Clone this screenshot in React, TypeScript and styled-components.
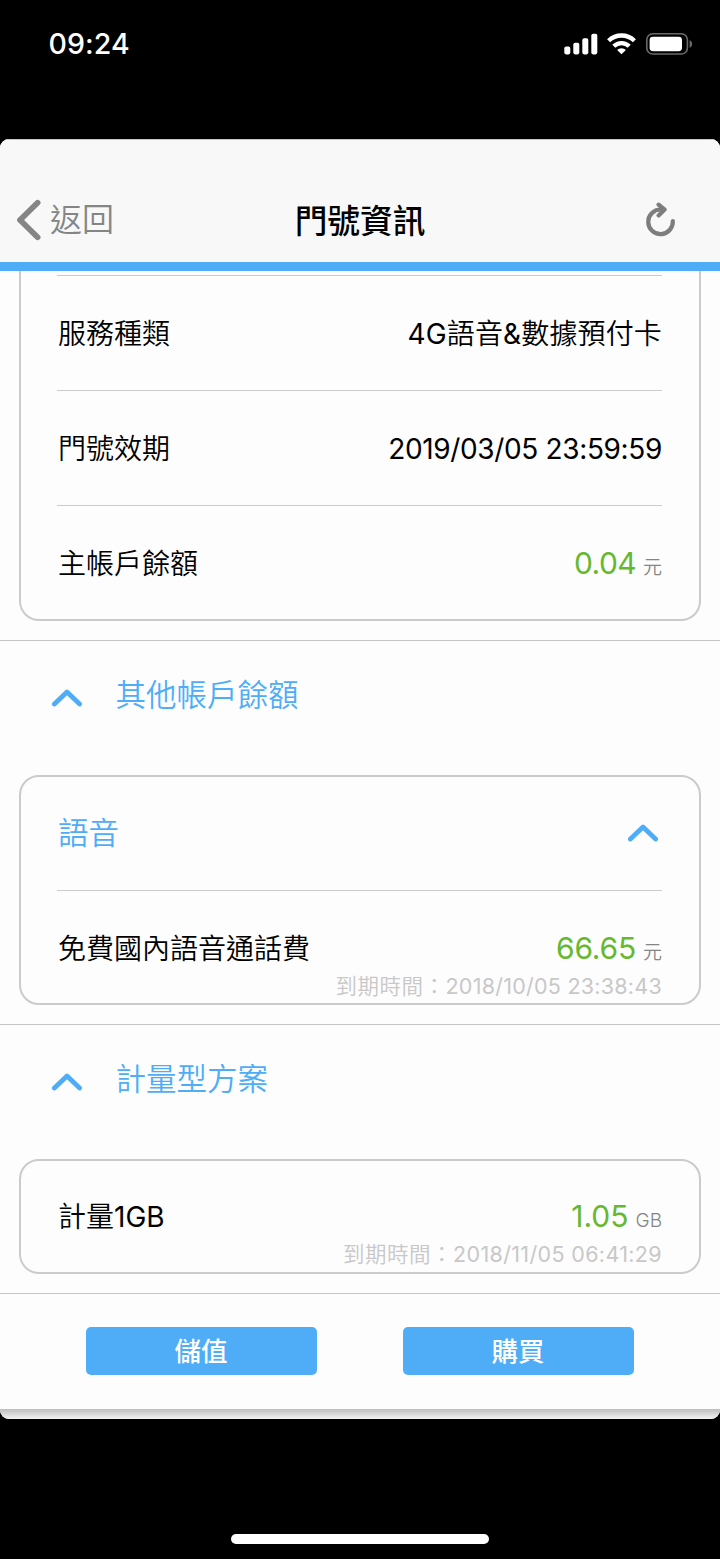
import React from "react";
import styled, { createGlobalStyle } from "styled-components";

const BLUE = "#4fadf8";
const LINE = "#cbcbcb";

const Global = createGlobalStyle`
  *, *::before, *::after { box-sizing: border-box; }
  html, body { margin: 0; background: #000; }
  body { font-family: Inter, "Noto Sans CJK TC", sans-serif; color: #000; }
  button { font: inherit; color: inherit; border: 0; background: none; padding: 0; }
`;

const Phone = styled.div`
  width: 720px;
  height: 1559px;
  background: #000;
  display: flex;
  flex-direction: column;
  overflow: hidden;
`;

const StatusBar = styled.div`
  height: 139px;
  flex: none;
  display: flex;
  justify-content: space-between;
  align-items: flex-start;
  padding: 24px 27px 0 48.5px;
  color: #fff;
`;

const Clock = styled.span`
  font-size: 28.5px;
  line-height: 40px;
  font-weight: 550;
  letter-spacing: 0.1px;
`;

const StatusIcons = styled.div`
  display: flex;
  padding-top: 8px;
  svg { display: block; }
`;

const Screen = styled.main`
  height: 1280px;
  flex: none;
  border-radius: 9px;
  overflow: hidden;
  background: #fdfdfd;
  display: flex;
  flex-direction: column;
`;

const Header = styled.header`
  height: 132px;
  flex: none;
  background: #f8f8f8;
  border-top: 1px solid #c4c4c4;
  border-bottom: 9px solid ${BLUE};
  display: grid;
  grid-template-columns: 1fr auto 1fr;
  align-items: end;
  padding: 0 43px 17px 16px;
`;

const BackButton = styled.button`
  display: flex;
  align-items: center;
  gap: 8px;
  height: 50px;
  color: #858585;
  font-size: 32px;
  font-weight: 350;
  line-height: 44px;
  padding-bottom: 1px;
`;

const Title = styled.h1`
  margin: 0;
  padding-left: 27px;
  font-size: 32.7px;
  line-height: 48px;
  font-weight: 500;
`;

const RefreshButton = styled.button`
  justify-self: end;
  height: 50px;
  display: flex;
  align-items: center;
`;

const Section = styled.section<{ $height: number }>`
  height: ${(p) => p.$height}px;
  flex: none;
  border-bottom: 1px solid #c4c4c4;
  padding: 0 19px;
`;

const Card = styled.div<{ $clipped?: boolean }>`
  border: 2px solid ${LINE};
  border-radius: 20px;
  padding: 0 37px 0 36px;
  ${(p) =>
    p.$clipped &&
    `border-top: 0; border-top-left-radius: 0; border-top-right-radius: 0; padding-top: 4px;`}
`;

const Row = styled.div<{ $divided?: boolean; $height: number }>`
  height: ${(p) => p.$height}px;
  border-top: ${(p) => (p.$divided ? `1px solid ${LINE}` : "0")};
  padding-top: ${(p) => (p.$divided ? 38 : 36)}px;
`;

const RowLine = styled.div`
  height: 40px;
  display: flex;
  justify-content: space-between;
  align-items: center;
  line-height: 40px;
`;

const Label = styled.span`
  font-size: 28px;
  font-weight: 350;
  padding-left: 1px;
`;

const Value = styled.span<{ $tracking?: number }>`
  font-size: 28px;
  font-weight: 350;
  letter-spacing: ${(p) => p.$tracking ?? 0}px;
`;

const Latin = styled.span`
  font-weight: 400;
`;

const Amount = styled.span<{ $tracking?: number }>`
  display: flex;
  align-items: baseline;
  gap: 7px;
  padding-top: 3px;
  color: #66b82e;
  font-size: 30px;
  letter-spacing: ${(p) => p.$tracking ?? 0}px;
`;

const Unit = styled.small`
  font-size: 19px;
  font-weight: 350;
  letter-spacing: 0;
  color: #858585;
`;

const Expiry = styled.div`
  margin-top: 3px;
  line-height: 28px;
  font-size: 21.5px;
  font-weight: 350;
  text-align: right;
  color: #c8c8c8;
  letter-spacing: 0.5px;
`;

const Timestamp = styled.time<{ $tracking: number }>`
  font-weight: 400;
  letter-spacing: ${(p) => p.$tracking}px;
`;

const SectionTitle = styled.h2`
  margin: 0;
  height: 134px;
  padding: 32px 0 0 33px;
  display: flex;
  align-items: flex-start;
  gap: 33.5px;
  font-size: 30.5px;
  line-height: 44px;
  font-weight: 350;
  color: ${BLUE};
  svg { margin-top: 16px; }
`;

const CardTitle = styled.span`
  font-size: 30.5px;
  font-weight: 350;
  color: ${BLUE};
  padding-left: 1px;
`;

const CardToggle = styled.button`
  display: flex;
  margin-right: 4px;
`;

const Actions = styled.footer`
  height: 115px;
  flex: none;
  display: flex;
  justify-content: center;
  gap: 86px;
  padding-top: 33px;
`;

const ActionButton = styled.button`
  width: 231px;
  height: 48px;
  border-radius: 5px;
  background: ${BLUE};
  color: #fff;
  font-size: 26.5px;
  font-weight: 500;
  line-height: 48px;
  padding-right: 1px;
`;

const ScreenEdge = styled.div`
  flex: 1;
  background: linear-gradient(#bdbdbd, #f0f0f0 95%);
`;

const HomeArea = styled.div`
  flex: 1;
  display: flex;
  justify-content: center;
  align-items: flex-end;
  padding-bottom: 15px;
`;

const HomeIndicator = styled.div`
  width: 258px;
  height: 10px;
  border-radius: 5px;
  background: #fff;
`;

const ChevronUp = () => (
  <svg width="30" height="18" viewBox="0 0 30 18" fill="none">
    <path d="M2.4 15 L15 3 L27.6 15" stroke={BLUE} strokeWidth="4.8" strokeLinecap="round" strokeLinejoin="round" />
  </svg>
);

const ChevronLeft = () => (
  <svg width="26" height="42" viewBox="0 0 26 42" fill="none">
    <path d="M21.6 3.8 L4 21 L21.6 38.2" stroke="#858585" strokeWidth="5.8" strokeLinecap="round" strokeLinejoin="round" />
  </svg>
);

const Refresh = () => (
  <svg width="32" height="36" viewBox="0 0 32 36" fill="none" stroke="#7d7d7d" strokeWidth="4.2" strokeLinecap="round" strokeLinejoin="round">
    <path d="M27.8 19 A12.3 12.3 0 1 1 15.5 7.5 L19 7.5" />
    <path d="M13.6 2.6 L19.6 7.6 L13.6 13.4" />
  </svg>
);

const Status = () => (
  <svg width="129" height="24" viewBox="0 0 129 24">
    <g fill="#fff">
      <rect x="0.3" y="14.6" width="6" height="7.8" rx="1.8" />
      <rect x="9.3" y="10.8" width="6" height="11.6" rx="1.8" />
      <rect x="18.3" y="6.2" width="6" height="16.2" rx="1.8" />
      <rect x="27.3" y="1.8" width="6" height="20.6" rx="1.8" />
      <path d="M57.5 22.2 L53.1 18 A6.2 6.2 0 0 1 61.9 18 Z" />
    </g>
    <g fill="none" stroke="#fff" strokeWidth="4.3">
      <path d="M49.8 14.3 A10.8 10.8 0 0 1 65.2 14.3" />
      <path d="M44.6 8.8 A18.4 18.4 0 0 1 70.4 8.8" />
    </g>
    <rect x="82.8" y="1.8" width="40.6" height="20.2" rx="6" fill="none" stroke="#696969" strokeWidth="1.6" />
    <rect x="85.6" y="4.8" width="32.4" height="14.4" rx="3.4" fill="#fff" />
    <path d="M125.6 8.2 C129 9.4 129 14.6 125.6 15.8 Z" fill="#696969" />
  </svg>
);

export default function App() {
  return (
    <Phone>
      <Global />
      <StatusBar>
        <Clock>09:24</Clock>
        <StatusIcons>
          <Status />
        </StatusIcons>
      </StatusBar>
      <Screen>
        <Header>
          <BackButton>
            <ChevronLeft />
            返回
          </BackButton>
          <Title>門號資訊</Title>
          <RefreshButton aria-label="refresh">
            <Refresh />
          </RefreshButton>
        </Header>

        <Section $height={370}>
          <Card $clipped>
            <Row $divided $height={115}>
              <RowLine>
                <Label>服務種類</Label>
                <Value $tracking={0.15}>
                  <Latin>4G</Latin>語音<Latin>&amp;</Latin>數據預付卡
                </Value>
              </RowLine>
            </Row>
            <Row $divided $height={115}>
              <RowLine>
                <Label>門號效期</Label>
                <Value $tracking={-0.35}>
                  <Latin>2019/03/05 23:59:59</Latin>
                </Value>
              </RowLine>
            </Row>
            <Row $divided $height={114}>
              <RowLine>
                <Label>主帳戶餘額</Label>
                <Amount $tracking={-0.6}>
                  0.04<Unit>元</Unit>
                </Amount>
              </RowLine>
            </Row>
          </Card>
        </Section>

        <Section $height={384}>
          <SectionTitle>
            <ChevronUp />
            其他帳戶餘額
          </SectionTitle>
          <Card>
            <Row $height={113}>
              <RowLine>
                <CardTitle>語音</CardTitle>
                <CardToggle aria-label="toggle">
                  <ChevronUp />
                </CardToggle>
              </RowLine>
            </Row>
            <Row $divided $height={113}>
              <RowLine>
                <Label>免費國內語音通話費</Label>
                <Amount $tracking={-0.2}>
                  66.65<Unit>元</Unit>
                </Amount>
              </RowLine>
              <Expiry>
                到期時間：<Timestamp $tracking={0.25}>2018/10/05 23:38:43</Timestamp>
              </Expiry>
            </Row>
          </Card>
        </Section>

        <Section $height={269}>
          <SectionTitle>
            <ChevronUp />
            計量型方案
          </SectionTitle>
          <Card>
            <Row $height={111}>
              <RowLine>
                <Label>
                  計量<Latin>1GB</Latin>
                </Label>
                <Amount>
                  1.05<Unit>GB</Unit>
                </Amount>
              </RowLine>
              <Expiry>
                到期時間：<Timestamp $tracking={0.35}>2018/11/05 06:41:29</Timestamp>
              </Expiry>
            </Row>
          </Card>
        </Section>

        <Actions>
          <ActionButton>儲值</ActionButton>
          <ActionButton>購買</ActionButton>
        </Actions>
        <ScreenEdge />
      </Screen>
      <HomeArea>
        <HomeIndicator />
      </HomeArea>
    </Phone>
  );
}
